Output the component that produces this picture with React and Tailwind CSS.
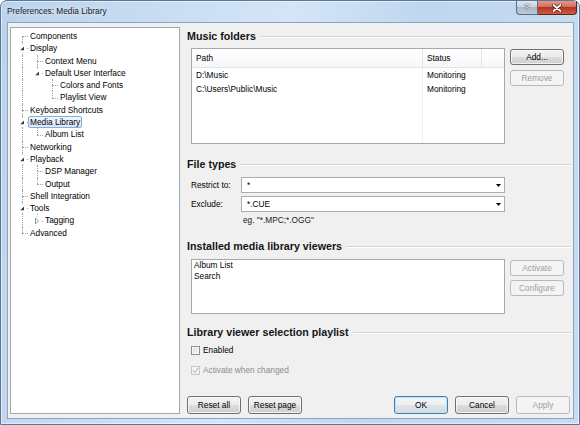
import React from "react";

const tree = [
  { label: "Components", depth: 0 },
  { label: "Display", depth: 0, open: true },
  { label: "Context Menu", depth: 1 },
  { label: "Default User Interface", depth: 1, open: true },
  { label: "Colors and Fonts", depth: 2 },
  { label: "Playlist View", depth: 2 },
  { label: "Keyboard Shortcuts", depth: 0 },
  { label: "Media Library", depth: 0, open: true, selected: true },
  { label: "Album List", depth: 1 },
  { label: "Networking", depth: 0 },
  { label: "Playback", depth: 0, open: true },
  { label: "DSP Manager", depth: 1 },
  { label: "Output", depth: 1 },
  { label: "Shell Integration", depth: 0 },
  { label: "Tools", depth: 0, open: true },
  { label: "Tagging", depth: 1, closed: true },
  { label: "Advanced", depth: 0 },
];

// a later row on the same level before the branch closes
const hasNextSibling = (i) => {
  const d = tree[i].depth;
  for (let j = i + 1; j < tree.length; j++) {
    if (tree[j].depth < d) return false;
    if (tree[j].depth === d) return true;
  }
  return false;
};

const ancestorAt = (i, level) => {
  for (let k = i - 1; k >= 0; k--) if (tree[k].depth === level) return k;
  return -1;
};

const dots = "border-dotted border-[#a3a3a3]";

const TreeRow = ({ row, index }) => {
  const cols = [];
  for (let l = 0; l <= row.depth; l++) {
    if (l < row.depth) {
      const k = ancestorAt(index, l);
      cols.push(
        <div key={l} className="relative w-[15px] h-full shrink-0">
          {hasNextSibling(k) && (
            <div className={`absolute left-[7px] top-0 bottom-0 border-l ${dots}`} />
          )}
        </div>
      );
    } else {
      cols.push(
        <div key={l} className="relative w-[15px] h-full shrink-0">
          {index > 0 && (
            <div className={`absolute left-[7px] top-0 h-1/2 border-l ${dots}`} />
          )}
          {hasNextSibling(index) && (
            <div className={`absolute left-[7px] top-1/2 bottom-0 border-l ${dots}`} />
          )}
          <div className={`absolute left-[7px] top-1/2 w-[6px] border-t ${dots}`} />
          {row.open && (
            <div className="absolute left-[4px] top-1/2 -translate-y-1/2 w-[7px] h-[9px] bg-white flex items-center pl-[1px]">
              <svg width="4" height="4" viewBox="0 0 4 4">
                <polygon points="4,0 4,4 0,4" fill="#3a3a3a" />
              </svg>
            </div>
          )}
          {row.closed && (
            <div className="absolute left-[4px] top-1/2 -translate-y-1/2 w-[7px] h-[9px] bg-white flex items-center pl-[1px]">
              <svg width="5" height="7" viewBox="0 0 5 7">
                <polygon points="0.5,0.5 3.5,3.5 0.5,6.5" fill="#fff" stroke="#9a9a9a" strokeWidth="1" />
              </svg>
            </div>
          )}
        </div>
      );
    }
  }
  return (
    <div className="flex items-center h-[12.3px]">
      {cols}
      <span
        className={`ml-[-2px] h-[12px] px-[1px] flex items-center border rounded-[2px] whitespace-nowrap ${
          row.selected
            ? "border-[#84acdd] bg-[linear-gradient(#f1f7fe,#d9e8fb)]"
            : "border-transparent"
        }`}
      >
        {row.label}
      </span>
    </div>
  );
};

const Btn = ({ children, disabled, isDefault, className = "" }) => {
  let look =
    "border-[#707070] bg-[linear-gradient(#f2f2f2_0%,#ebebeb_50%,#dddddd_50%,#cfcfcf_100%)] shadow-[inset_0_0_0_1px_rgba(255,255,255,0.7)] text-black";
  if (disabled) look = "border-[#b6babe] bg-[#f4f4f4] text-[#a0a0a0]";
  if (isDefault)
    look =
      "border-[#3c7fb1] bg-[linear-gradient(#f3f5f7_0%,#eceff1_50%,#e0e4e7_50%,#d6dbdf_100%)] shadow-[inset_0_0_0_1px_#bfe3f8] text-black";
  return (
    <div
      className={`w-[54px] flex items-center justify-center rounded-[3px] border shrink-0 ${look} ${className}`}
    >
      {children}
    </div>
  );
};

const Heading = ({ children }) => (
  <div className="h-[13px] flex items-center shrink-0">
    <span className="text-[10.7px] font-bold text-[#151515] whitespace-nowrap">{children}</span>
    <div className="flex-1 ml-[4px] mt-[1px] border-t border-b border-t-[#d3d3d3] border-b-white" />
  </div>
);

const Combo = ({ value }) => (
  <div className="w-[264px] h-[16px] flex items-center border border-[#abadb3] bg-white pl-[5px] pr-[3px]">
    <span className="flex-1">{value}</span>
    <svg width="5" height="3" viewBox="0 0 5 3">
      <polygon points="0,0 5,0 2.5,3" fill="#000" />
    </svg>
  </div>
);

const Check = ({ checked, disabled }) => (
  <div
    className={`w-[9px] h-[9px] border flex items-center justify-center shrink-0 ${
      disabled
        ? "border-[#c4c6c8] bg-[#f4f4f4]"
        : "border-[#8e8f8f] bg-[linear-gradient(135deg,#dadada,#fafafa)] shadow-[inset_0_0_0_1px_#f6f6f6]"
    }`}
  >
    {checked && (
      <svg width="7" height="7" viewBox="0 0 7 7">
        <path d="M1 3.5 L2.8 5.6 L6 1" stroke="#a9a9a9" strokeWidth="1" fill="none" />
      </svg>
    )}
  </div>
);

const App = () => {
  return (
    <div className="w-[580px] h-[425px] bg-white font-['Liberation_Sans',Arial,sans-serif] text-[8.3px] leading-none text-black overflow-hidden">
      <div className="h-full flex flex-col rounded-t-[7px] border border-[#5f7690] bg-[linear-gradient(100deg,#bad3ed_0%,#c8ddf3_25%,#d3e5f8_45%,#bfd7f0_65%,#c6dcf2_100%)] shadow-[inset_0_0_0_1px_rgba(255,255,255,0.5)]">
        {/* Title bar */}
        <div className="h-[21px] flex items-start justify-between pl-[6px] pr-[2px] shrink-0">
          <span className="self-center text-[8.3px] text-[#1b1b1b] [text-shadow:0_0_6px_#fff]">
            Preferences: Media Library
          </span>
          <div className="flex">
            <div className="w-[22px] h-[14px] rounded-bl-[4px] border border-t-0 border-[#5d6b7b] bg-[linear-gradient(#dfe7f0_0%,#c3cfdc_50%,#a9b9ca_50%,#bccbda_100%)] flex items-center justify-center text-[9px] font-bold text-[#eef2f6] [text-shadow:0_0_1px_#2c3946,0_0_1px_#2c3946]">
              ?
            </div>
            <div className="w-[39px] h-[14px] rounded-br-[4px] border border-t-0 border-l-0 border-[#5e231c] bg-[linear-gradient(#e39a8b_0%,#d0695a_50%,#b8331f_50%,#cf5b45_100%)] flex items-center justify-center">
              <svg width="10" height="8" viewBox="0 0 10 8">
                <path d="M1.5 1 L8.5 7 M8.5 1 L1.5 7" stroke="#4a1a14" strokeWidth="3.2" strokeLinecap="round" />
                <path d="M1.5 1 L8.5 7 M8.5 1 L1.5 7" stroke="#fff" strokeWidth="1.7" strokeLinecap="round" />
              </svg>
            </div>
          </div>
        </div>

        {/* Client area */}
        <div className="flex-1 flex pl-[6px] pr-[5px] pb-[5px]">
          <div className="flex-1 flex border border-[#8ea4bd] bg-[#f0f0f0]">
            {/* Page tree */}
            <div className="my-[4px] ml-[2px] w-[170px] border border-[#a0a7b0] bg-white pl-[4px] pt-[2px] shrink-0">
              {tree.map((row, i) => (
                <TreeRow key={row.label} row={row} index={i} />
              ))}
            </div>

            {/* Page content */}
            <div className="flex-1 flex flex-col pl-[7px] pr-[2px] pt-[7px] pb-[4px]">
              <Heading>Music folders</Heading>
              <div className="mt-[5px] flex items-start h-[96px] shrink-0">
                <div className="ml-[4px] w-[314px] h-full border border-[#a3a9b0] bg-white flex flex-col">
                  <div className="h-[19px] flex border-b border-[#e2e4e6] bg-[linear-gradient(#ffffff,#f6f7f9)] shrink-0">
                    <div className="w-[231px] pl-[4px] flex items-center border-r border-[#e2e4e6]">Path</div>
                    <div className="w-[59px] pl-[4px] flex items-center border-r border-[#e2e4e6]">Status</div>
                    <div className="flex-1" />
                  </div>
                  <div className="flex-1 flex">
                    <div className="w-[231px] border-r border-[#f0f0f0] pl-[4px]">
                      <div className="h-[14px] flex items-center">D:\Music</div>
                      <div className="h-[14px] flex items-center">C:\Users\Public\Music</div>
                    </div>
                    <div className="pl-[4px]">
                      <div className="h-[14px] flex items-center">Monitoring</div>
                      <div className="h-[14px] flex items-center">Monitoring</div>
                    </div>
                  </div>
                </div>
                <div className="ml-[5px] mt-[1px] flex flex-col gap-[5px]">
                  <Btn className="h-[16px]">Add...</Btn>
                  <Btn className="h-[16px]" disabled>
                    Remove
                  </Btn>
                </div>
              </div>

              <div className="mt-[14px]">
                <Heading>File types</Heading>
              </div>
              <div className="mt-[6px] flex items-center">
                <span className="ml-[4px] w-[50px]">Restrict to:</span>
                <Combo value="*" />
              </div>
              <div className="mt-[3px] flex items-center">
                <span className="ml-[4px] w-[50px]">Exclude:</span>
                <Combo value="*.CUE" />
              </div>
              <div className="mt-[3px] h-[11px] ml-[56px] flex items-center text-[#222]">
                eg. "*.MPC;*.OGG"
              </div>

              <div className="mt-[14px]">
                <Heading>Installed media library viewers</Heading>
              </div>
              <div className="mt-[6px] flex items-start h-[55px] shrink-0">
                <div className="ml-[4px] w-[314px] h-full border border-[#a3a9b0] bg-white pl-[2px]">
                  <div className="h-[11px] flex items-center">Album List</div>
                  <div className="h-[11px] flex items-center">Search</div>
                </div>
                <div className="ml-[5px] mt-[1px] flex flex-col gap-[4px]">
                  <Btn className="h-[16px]" disabled>
                    Activate
                  </Btn>
                  <Btn className="h-[16px]" disabled>
                    Configure
                  </Btn>
                </div>
              </div>

              <div className="mt-[12px]">
                <Heading>Library viewer selection playlist</Heading>
              </div>
              <div className="mt-[6px] h-[11px] ml-[4px] flex items-center gap-[3px]">
                <Check />
                <span>Enabled</span>
              </div>
              <div className="mt-[9px] h-[11px] ml-[4px] flex items-center gap-[3px]">
                <Check checked disabled />
                <span className="text-[#8d8d8d]">Activate when changed</span>
              </div>

              <div className="mt-auto h-[18px] flex gap-[7px] mr-[1px]">
                <Btn>Reset all</Btn>
                <Btn>Reset page</Btn>
                <Btn isDefault className="ml-auto">
                  OK
                </Btn>
                <Btn>Cancel</Btn>
                <Btn disabled>Apply</Btn>
              </div>
            </div>
          </div>
        </div>
      </div>
    </div>
  );
};

export default App;
